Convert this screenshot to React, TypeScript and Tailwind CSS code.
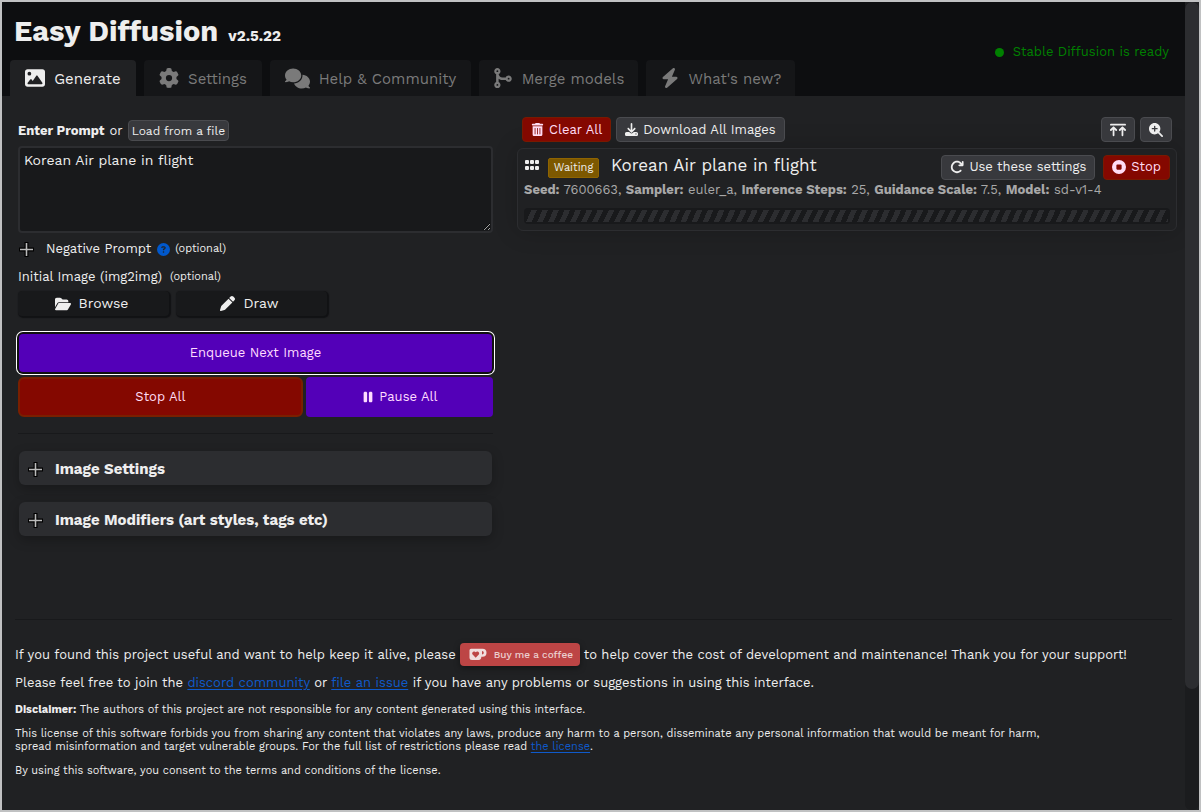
import type { ReactNode } from "react";
import {
  FaArrowRotateRight,
  FaArrowsUpToLine,
  FaBolt,
  FaCircleQuestion,
  FaCircleStop,
  FaCodeMerge,
  FaComments,
  FaDownload,
  FaFolderOpen,
  FaGear,
  FaGrip,
  FaImage,
  FaMagnifyingGlassPlus,
  FaPause,
  FaPen,
  FaTrashCan,
} from "react-icons/fa6";

const TABS = [
  { label: "Generate", icon: <FaImage />, width: "w-[126px]" },
  { label: "Settings", icon: <FaGear />, width: "w-[118px]" },
  { label: "Help & Community", icon: <FaComments className="text-[25px]" />, width: "w-[201px]" },
  { label: "Merge models", icon: <FaCodeMerge />, width: "w-[159px]" },
  { label: "What's new?", icon: <FaBolt />, width: "w-[149px]" },
];

const TASK_INFO = [
  ["Seed", "7600663"],
  ["Sampler", "euler_a"],
  ["Inference Steps", "25"],
  ["Guidance Scale", "7.5"],
  ["Model", "sd-v1-4"],
];

function Header() {
  return (
    <header className="flex h-[94px] items-end justify-between bg-[#0d0e10] pl-2 pr-4">
      <div>
        <h1 className="mb-1 flex items-baseline gap-2.5 pl-1 text-[29px] font-bold leading-10">
          Easy Diffusion <small className="text-[15px]">v2.5.22</small>
        </h1>
        <nav className="flex gap-2">
          {TABS.map((tab, i) => (
            <button
              key={tab.label}
              className={`flex h-9 items-center justify-center gap-[9px] whitespace-nowrap rounded-t text-[15px] ${tab.width} ${
                i === 0 ? "bg-[#202123] text-[#eee]" : "bg-[#151618] text-[#7a7a7a]"
              }`}
            >
              <span className="text-[20px]">{tab.icon}</span>
              <span className="pt-0.5">{tab.label}</span>
            </button>
          ))}
        </nav>
      </div>
      <div className="mb-[34px] flex items-center gap-[9px] text-[13px] leading-5 text-[#008000]">
        <span className="h-[9px] w-[9px] rounded-full bg-[#008000]" />
        Stable Diffusion is ready
      </div>
    </header>
  );
}

function Button({
  children,
  danger,
  label,
  className = "",
}: {
  children: ReactNode;
  danger?: boolean;
  label?: string;
  className?: string;
}) {
  return (
    <button
      aria-label={label}
      className={`flex h-[25px] items-center justify-center gap-[5px] whitespace-nowrap rounded border px-2 text-[13px] ${
        danger ? "border-[#7a1900] bg-[#840800] text-[#ffdcf4]" : "border-[#4a4b4f] bg-[#38393d] text-[#eee]"
      } ${className}`}
    >
      {children}
    </button>
  );
}

function Plus() {
  return (
    <svg viewBox="0 0 17 17" className="h-[17px] w-[17px] shrink-0" aria-hidden="true">
      <path d="M8.5 1v15M1 8.5h15" stroke="#000" strokeWidth="4" />
      <path d="M8.5 2v13M2 8.5h13" stroke="#bbb" strokeWidth="1.6" />
    </svg>
  );
}

function Panel({ title }: { title: string }) {
  return (
    <button className="mx-px flex h-[34px] items-center gap-[11px] rounded-md bg-[#2c2d30] px-2 pt-0.5 text-left text-[15px] font-bold shadow-[0_4px_12px_rgba(0,0,0,0.25)]">
      <Plus />
      {title}
    </button>
  );
}

function Editor() {
  return (
    <section className="flex w-[475px] shrink-0 flex-col">
      <div className="flex h-[21px] items-center gap-[5px] text-[13px]">
        <label htmlFor="prompt" className="font-bold">
          Enter Prompt
        </label>
        or
        <button className="h-[21px] rounded border border-[#4a4b4f] bg-[#38393d] px-[3px] text-[12px]">
          Load from a file
        </button>
      </div>
      <textarea
        id="prompt"
        defaultValue="Korean Air plane in flight"
        className="mt-[5px] block h-[87px] w-full rounded border-2 border-[#2c2d30] bg-[#18191b] px-1 py-1 text-[14px] leading-4 outline-none"
      />
      <div className="mt-[7px] flex h-[18px] items-center text-[13px]">
        <button className="flex items-center gap-[11px]">
          <Plus />
          Negative Prompt
        </button>
        <FaCircleQuestion className="ml-1.5 text-[13px] text-[#0058cc]" />
        <small className="ml-[5px] text-[11px]">(optional)</small>
      </div>
      <div className="mt-2.5 flex h-[18px] items-center gap-2 text-[13px]">
        Initial Image (img2img) <small className="text-[11px]">(optional)</small>
      </div>
      <div className="mt-[5px] flex gap-[7px] text-[14px]">
        <button className="flex h-[25px] w-[151px] items-center justify-center gap-2 rounded bg-[#18191b] pr-1 shadow-[1px_1px_1px_1px_#111214]">
          <FaFolderOpen className="text-[16px]" />
          Browse
        </button>
        <button className="flex h-[25px] w-[151px] items-center justify-center gap-2 rounded bg-[#18191b] pr-1 shadow-[1px_1px_1px_1px_#111214]">
          <FaPen className="text-[15px]" />
          Draw
        </button>
      </div>
      <button className="mx-px mt-[18px] h-[38px] rounded bg-[#5300b8] text-[13px] text-[#ffdcff] shadow-[0_0_0_2px_#101010,0_0_0_3px_#fff]">
        Enqueue Next Image
      </button>
      <div className="mt-[5px] flex gap-[3px] text-[13px]">
        <button className="h-10 flex-[3] rounded-md border-2 border-[#7a1f00] bg-[#840800] text-[#ffdcf4]">
          Stop All
        </button>
        <button className="flex h-10 flex-[2] items-center justify-center gap-1 rounded bg-[#5300b8] text-[#ffdcff]">
          <FaPause className="text-[14px]" />
          Pause All
        </button>
      </div>
      <hr className="mb-[17px] mt-4 border-[#18191b]" />
      <div className="flex flex-col gap-[17px]">
        <Panel title="Image Settings" />
        <Panel title="Image Modifiers (art styles, tags etc)" />
      </div>
    </section>
  );
}

function Task() {
  return (
    <article className="mt-1.5 rounded-md border border-[#2c2d30] px-1.5 pb-1.5 pt-[5px] shadow-[0_0_24px_rgba(0,0,0,0.2)]">
      <div className="flex h-[26px] items-center">
        <FaGrip className="-mt-1 text-[16px]" />
        <span className="ml-2 mt-0.5 flex h-5 w-[51px] items-center justify-center rounded-xs border border-[#8f6400] bg-[#7d5800] pt-px text-[11px]">
          Waiting
        </span>
        <h2 className="-mt-0.5 ml-3 flex-1 truncate text-[17px]">Korean Air plane in flight</h2>
        <Button>
          <FaArrowRotateRight className="text-[14px]" />
          Use these settings
        </Button>
        <Button danger className="ml-2">
          <FaCircleStop className="text-[14px]" />
          Stop
        </Button>
      </div>
      <p className="mt-0.5 text-[13px] leading-4 text-[#a8a8a8]">
        {TASK_INFO.map(([name, value], i) => (
          <span key={name}>
            {i > 0 && ", "}
            <b>{name}:</b> {value}
          </span>
        ))}
      </p>
      <div className="mt-2.5 h-4 rounded bg-[#18191b] px-0.5 py-0.5">
        <div className="h-3 bg-[repeating-linear-gradient(115deg,#18191b_0_5px,#2c2d30_5px_10px)]" />
      </div>
    </article>
  );
}

function Preview() {
  return (
    <section className="min-w-0 flex-1">
      <div className="-mt-[3px] flex gap-[5px] px-[5px]">
        <Button danger>
          <FaTrashCan />
          Clear All
        </Button>
        <Button>
          <FaDownload />
          Download All Images
        </Button>
        <Button label="Scroll to top" className="ml-auto w-[34px]">
          <FaArrowsUpToLine className="shrink-0 text-[16px]" />
        </Button>
        <Button label="Zoom in" className="w-8">
          <FaMagnifyingGlassPlus className="shrink-0 text-[14px]" />
        </Button>
      </div>
      <Task />
    </section>
  );
}

function Coffee() {
  return (
    <a
      href="#coffee"
      className="mx-1 mb-[3px] inline-flex h-[23px] w-[120px] items-center gap-[7px] whitespace-nowrap rounded-sm bg-[#bd4545] pl-[9px] align-middle text-[10px] font-medium leading-3 text-[#ecd0d0] shadow-[0_2px_6px_rgba(0,0,0,0.4)]"
    >
      <svg viewBox="0 0 18 13" className="h-[13px] w-[18px] shrink-0" aria-hidden="true">
        <path
          d="M2 .8h11.500a4 4 0 0 1 0 8h-1.200A3 3 0 0 1 9.500 12H3A2.500 2.500 0 0 1 .5 9.500V2.300A1.500 1.500 0 0 1 2 .8zM13 3v3.600a1.800 1.800 0 0 0 0-3.600z"
          fill="#f0dede"
          fillRule="evenodd"
        />
        <path d="M6.700 9.800 3.600 6.600C2.100 4.700 5.200 2.300 6.700 4.300 8.200 2.300 11.300 4.700 9.800 6.600z" fill="#bd4545" />
      </svg>
      Buy me a coffee
    </a>
  );
}

function Link({ href, children }: { href: string; children: ReactNode }) {
  return (
    <a href={href} className="text-[#0f5acb] underline underline-offset-2">
      {children}
    </a>
  );
}

function Footer() {
  return (
    <footer className="mx-[13px] mt-auto border-t border-[#18191b] pb-[33px] pt-[22px] text-[13px]">
      <p className="leading-[26px]">
        If you found this project useful and want to help keep it alive, please
        <Coffee />
        to help cover the cost of development and maintenance! Thank you for your support!
      </p>
      <p className="mt-1 leading-5">
        Please feel free to join the <Link href="#discord">discord community</Link> or{" "}
        <Link href="#issue">file an issue</Link> if you have any problems or suggestions in using this interface.
      </p>
      <div className="mt-2.5 flex flex-col gap-[11px] text-[11px] leading-[13px]">
        <p>
          <b>Disclaimer:</b> The authors of this project are not responsible for any content generated using this
          interface.
        </p>
        <p>
          This license of this software forbids you from sharing any content that violates any laws, produce any harm
          to a person, disseminate any personal information that would be meant for harm,
          <br />
          spread misinformation and target vulnerable groups. For the full list of restrictions please read{" "}
          <Link href="#license">the license</Link>.
        </p>
        <p>By using this software, you consent to the terms and conditions of the license.</p>
      </div>
    </footer>
  );
}

export default function App() {
  return (
    <div className="flex min-h-screen border-2 border-[#c0c1c2] bg-[#202123] font-['Work_Sans',Inter,sans-serif] text-[#eee] [&_svg]:w-auto">
      <div className="flex min-w-0 flex-1 flex-col">
        <Header />
        <main className="flex gap-6 pb-8 pl-4 pr-2 pt-6">
          <Editor />
          <Preview />
        </main>
        <Footer />
      </div>
      <div className="flex w-3.5 flex-col rounded-md bg-[#1b1c1e]" aria-hidden="true">
        <div className="h-[85%] rounded-lg bg-[#2c2d30]" />
      </div>
    </div>
  );
}
